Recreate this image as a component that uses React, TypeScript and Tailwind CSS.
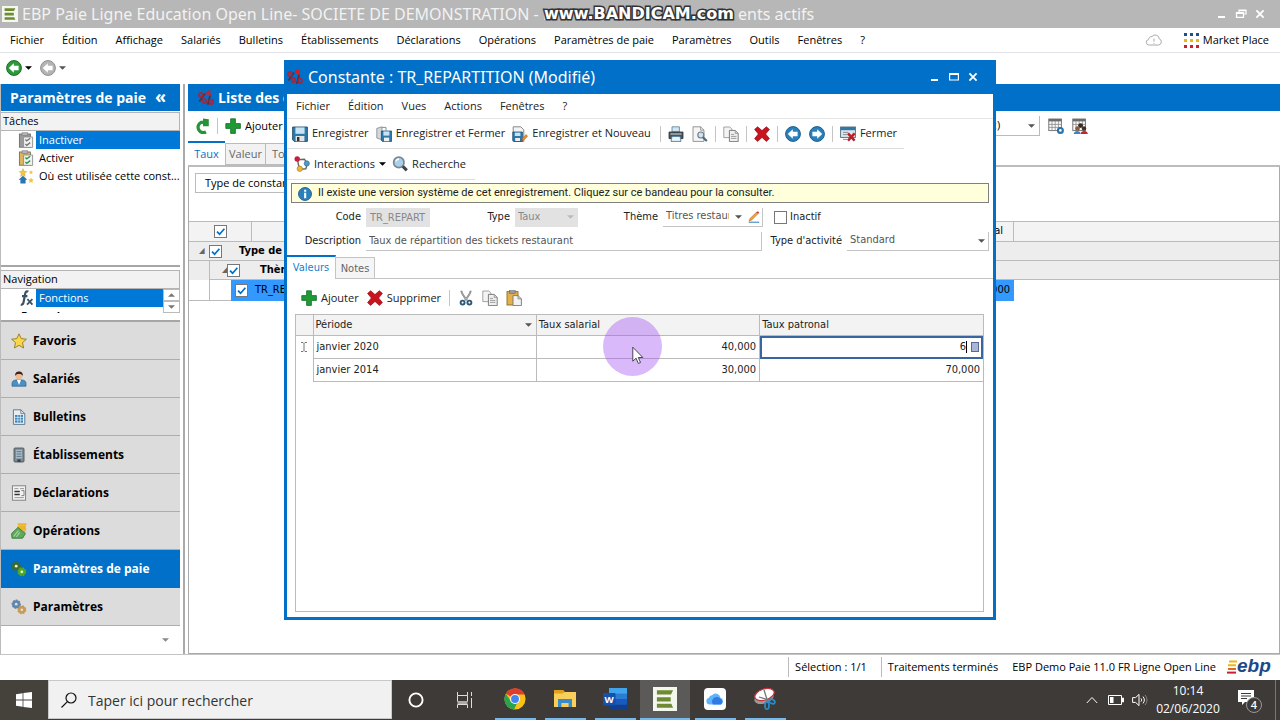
import React from "react";

type Kids = { children: React.ReactNode };

const Svg = ({ children, className = "size-4" }: Kids & { className?: string }) => (
  <svg viewBox="0 0 16 16" className={`${className} shrink-0`} aria-hidden="true">
    {children}
  </svg>
);

/* ---------- icons ---------- */

const EbpMark = ({ className = "size-4" }: { className?: string }) => (
  <Svg className={className}>
    <rect width="16" height="16" fill="#f4f7ee" />
    <path d="M2.6 2.2h10.8L12 5H2.6zM2.6 6.8h9.2v2.8H2.6zM2.6 11.2h9.6l1.2 2.6H2.6z" fill="#6f8a34" />
  </Svg>
);

const ArrowDisc = ({ color, dark, flip = false }: { color: string; dark: string; flip?: boolean }) => (
  <Svg>
    <circle cx="8" cy="8" r="7.4" fill={color} stroke={dark} strokeWidth="1" />
    <path
      d="M2.8 8l5-4.8v2.6h4.8v4.4H7.8v2.6z"
      fill="#fff"
      transform={flip ? "rotate(180 8 8)" : undefined}
    />
  </Svg>
);

const Percent = ({ className = "size-4" }: { className?: string }) => (
  <Svg className={className}>
    <path d="M7 3.4L1.4 11.4M12.2 5L9.8 14.8" stroke="#5c2a44" strokeWidth="1.8" />
    <g fill="none" stroke="#a3263a" strokeWidth="1.8">
      <ellipse cx="2.8" cy="5" rx="1.8" ry="2" />
      <ellipse cx="6.4" cy="11" rx="1.7" ry="2" />
      <ellipse cx="13.2" cy="11.8" rx="1.8" ry="2.2" />
    </g>
    <path d="M7.6 4.4L8.8 1l3.8-.8-.4 2.6 1 2.6-2.2.6-.8-1.8z" fill="#d01f26" />
  </Svg>
);

const Plus = () => (
  <Svg>
    <path d="M5.6 .8h4.8v4.8h5v4.8h-5v5H5.6v-5H.8V5.6h4.8z" fill="#1f9a35" stroke="#14702a" strokeWidth=".8" />
  </Svg>
);

const Cross = () => (
  <Svg>
    <path
      d="M3.6.8L8 4.6 12.4.8l3 2.6L11.6 8l3.8 4.6-3 2.8L8 11.4l-4.4 4-3-2.8L4.4 8 .6 3.4z"
      fill="#c8141e"
      stroke="#960b14"
      strokeWidth=".7"
    />
  </Svg>
);

const Refresh = () => (
  <Svg>
    <path d="M12 14A5.2 5.2 0 1 1 7 4.400h3" fill="none" stroke="#259437" strokeWidth="3.2" />
    <path d="M9 .6l5.800.600v7H9z" fill="#259437" />
  </Svg>
);

const Floppy = () => (
  <Svg>
    <path d="M.6 1h14.8v14.4H2.2L.6 13.8z" fill="#2f79a8" stroke="#1f4f70" strokeWidth=".9" />
    <rect x="3.4" y="1.4" width="9.2" height="6.4" fill="#c6e4f5" />
    <rect x="3.6" y="10" width="8.8" height="5.2" fill="#e4e4e4" />
    <rect x="5" y="11" width="2.4" height="4" fill="#333" />
  </Svg>
);

const FloppyDoor = () => (
  <Svg>
    <path d="M.8 2.4L6 .8v13L.8 12z" fill="#d5d8da" stroke="#7e868b" strokeWidth=".8" />
    <path d="M6 1.4h4v3.2" fill="none" stroke="#8a8f93" />
    <path d="M5.4 5h10.2v10.4H6.4l-1-1z" fill="#2f79a8" stroke="#1f4f70" strokeWidth=".8" />
    <rect x="7.4" y="5.4" width="6" height="4.2" fill="#c6e4f5" />
    <rect x="8" y="11.6" width="5.2" height="3.6" fill="#eee" />
  </Svg>
);

const FloppyNew = () => (
  <Svg>
    <path d="M1.2.8h7.6l3 3v11.6H1.2z" fill="#f3f3f3" stroke="#7c7c7c" strokeWidth=".9" />
    <path d="M.8 6h9.6v9.4H1.8l-1-1z" fill="#2f79a8" stroke="#1f4f70" strokeWidth=".8" />
    <rect x="2.8" y="6.6" width="5.6" height="3.4" fill="#c6e4f5" />
    <rect x="3.2" y="12" width="4.8" height="3" fill="#eee" />
    <path d="M9.8 14.6l1-2.8 3.4-3.2 1.4 1.6-3.2 3.4z" fill="#e8912d" stroke="#a8541a" strokeWidth=".5" />
  </Svg>
);

const Printer = () => (
  <Svg>
    <path d="M4 .8h7.4v5H4z" fill="#cfe6f5" stroke="#5a7a90" strokeWidth=".8" />
    <path d="M1 6h14v6.6H1z" fill="#4c5256" stroke="#2e3235" strokeWidth=".8" />
    <path d="M2.4 7.4h11.2v1.2H2.4z" fill="#bfc6ca" />
    <path d="M4 10.4h8l1 5H3z" fill="#eef5fa" stroke="#4a7fa6" strokeWidth=".9" />
  </Svg>
);

const Preview = () => (
  <Svg>
    <path d="M1 .8h7.6l3.4 3.4v11.2H1z" fill="#f5f5f5" stroke="#8c8c8c" strokeWidth=".9" />
    <path d="M8.6.8v3.4H12" fill="none" stroke="#8c8c8c" strokeWidth=".8" />
    <circle cx="8.8" cy="9" r="3" fill="#cfe3f2" stroke="#6d7b85" strokeWidth="1.1" />
    <path d="M11 11.4l3.8 3.6" stroke="#4b6b84" strokeWidth="2.2" />
  </Svg>
);

const Copy = () => (
  <Svg>
    <path d="M.8 1h6l2.2 2.2v8.4H.8z" fill="#f4f4f4" stroke="#9a9a9a" strokeWidth=".9" />
    <path d="M6.4 4.4h5.8l3 3v8.2H6.4z" fill="#f0f0f0" stroke="#707070" strokeWidth=".9" />
    <path d="M12.2 4.4v3h3M8 8.4h3M8 10.4h5.4M8 12.4h5.4" fill="none" stroke="#8a8a8a" strokeWidth=".8" />
  </Svg>
);

const Paste = () => (
  <Svg>
    <rect x="1" y="1.6" width="11" height="13.4" fill="#e2b04c" stroke="#8e6c26" strokeWidth=".9" />
    <rect x="3.6" y=".6" width="5.6" height="2.8" fill="#9c9c9c" stroke="#6a6a6a" strokeWidth=".6" />
    <path d="M7 5.6h5l3.4 3.2v6.8H7z" fill="#f2f2f2" stroke="#777" strokeWidth=".9" />
    <path d="M12 5.6v3.2h3.4" fill="none" stroke="#777" strokeWidth=".8" />
  </Svg>
);

const Scissors = () => (
  <Svg>
    <path d="M3.4.8c0 3 2.6 6 5.6 9.4M12.6.8c0 3-2.6 6-5.6 9.4" fill="none" stroke="#6e6e6e" strokeWidth="1.8" />
    <path d="M3.6 1.6c.4 2.6 2.6 5.4 5 8M12.4 1.6c-.4 2.6-2.6 5.4-5 8" fill="none" stroke="#eee" strokeWidth=".6" />
    <circle cx="4.6" cy="12.6" r="2" fill="none" stroke="#2c5878" strokeWidth="1.9" />
    <circle cx="11.4" cy="12.6" r="2" fill="none" stroke="#2c5878" strokeWidth="1.9" />
  </Svg>
);

const CloseForm = () => (
  <Svg>
    <rect x=".6" y="1" width="14.8" height="10.4" fill="#dfe3e6" stroke="#4c6a80" strokeWidth=".9" />
    <rect x=".6" y="1" width="14.8" height="3.2" fill="#2f79a8" />
    <path d="M3 6.4h5M3 8.6h4M3 13.4h4" stroke="#8a9299" />
    <path d="M8 7.4l6.6 7.2M14.6 7.4L8 14.6" stroke="#b5202b" strokeWidth="2.5" />
  </Svg>
);

const Interactions = () => (
  <Svg>
    <path d="M4 3.6l6.4-.4 3 4.4-1.6 5.2-6 .6M3.8 4.6l.6 4.2 1.4 3.2" fill="none" stroke="#666" strokeWidth="1.4" />
    <circle cx="3.2" cy="3" r="2.7" fill="#c81e3c" />
    <circle cx="12.8" cy="7.4" r="2.6" fill="#4b9cc4" stroke="#2c6c90" strokeWidth=".6" />
    <circle cx="5.8" cy="12.8" r="2.7" fill="#e9b83a" stroke="#a07a1c" strokeWidth=".6" />
  </Svg>
);

const Search = () => (
  <Svg>
    <circle cx="6.8" cy="6.4" r="5.2" fill="#a8d0ec" stroke="#7c858c" strokeWidth="1.7" />
    <path d="M4 5.4a3.2 3.2 0 0 1 3-2.4" stroke="#fff" strokeWidth="1.3" fill="none" />
    <path d="M10.8 10.4l4 4" stroke="#3e464c" strokeWidth="3" />
  </Svg>
);

const Info = () => (
  <Svg className="size-3.5">
    <circle cx="8" cy="8" r="7.4" fill="#2a80bb" stroke="#1d5c8a" />
    <path d="M7 6.6h2.4v6.2H7zM7 3h2.4v2.3H7z" fill="#fff" />
  </Svg>
);

const Clipboard = ({ color, check }: { color: string; check: string }) => (
  <Svg>
    <rect x="1.4" y="2" width="11" height="13.2" fill={color} stroke="#6e6e6e" strokeWidth=".9" />
    <rect x="4" y=".8" width="5.8" height="2.8" fill="#b5b5b5" stroke="#777" strokeWidth=".6" />
    <path d="M5.6 5h9v10.4h-9z" fill="#f1f3f3" stroke="#8a8f92" strokeWidth=".9" />
    <path d="M7.4 7.4l1.4 1.4 3.4-2.6M7.4 12l1.4 1.4 3.4-2.8" fill="none" stroke={check} strokeWidth="1.4" />
  </Svg>
);

const WhereUsed = () => (
  <Svg>
    <path d="M5 .6l1.2 2.6 2.6.4-2 2 .4 2.8L5 7 2.6 8.4l.6-2.8-2-2 2.6-.4z" fill="#f0c54c" stroke="#c39a2a" strokeWidth=".4" />
    <path d="M13 2l.7 1.4 1.5.2-1.1 1.1.3 1.6-1.4-.8-1.4.8.3-1.6-1.1-1.1 1.5-.2zM13 9.4l.9 1.8 1.9.3-1.4 1.4.4 2L13 14l-1.8.9.4-2-1.4-1.4 1.9-.3z" fill="#f0c54c" />
    <path d="M5 7.8l4.4 4H7.6v3.6H2.4v-3.6H.6z" fill="#2a74b0" />
  </Svg>
);

const Fx = () => (
  <Svg>
    <path d="M10.4 1.6C7.8.4 7.2 3 6.8 5.6L5.6 12c-.4 2-1.2 3-2.8 2.4M4 6.2h5.4" fill="none" stroke="#3d5164" strokeWidth="2.2" />
    <path d="M9.4 9.2l5 5.4M14.4 9.2l-5.4 5.4" stroke="#3d5164" strokeWidth="1.8" />
  </Svg>
);

const Star = () => (
  <Svg>
    <path d="M8 .8l2.2 4.8 5.2.6-3.9 3.5 1.1 5.3L8 12.3 3.4 15l1.1-5.3L.6 6.2l5.2-.6z" fill="#f8d748" stroke="#94781f" strokeWidth=".9" />
  </Svg>
);

const Person = () => (
  <Svg>
    <path d="M1 15.2v-2.8C1 10 3 9.2 5 9h6c2 .2 4 1 4 3.4v2.8z" fill="#4a90c4" stroke="#2a628e" strokeWidth=".7" />
    <path d="M6 9h4l-2 5z" fill="#fff" />
    <circle cx="8" cy="5" r="3.4" fill="#eebc92" />
    <path d="M4.2 5C3.6 1.6 6 .4 8 .4s4.4 1.2 3.8 4.6C11 3.4 10 3 8 3s-3 .4-3.8 2z" fill="#3a241b" />
  </Svg>
);

const PaySheet = () => (
  <Svg>
    <path d="M2.4.8h7.4l4 3.8v10.8H2.4z" fill="#e8edf1" stroke="#54728a" strokeWidth=".9" />
    <path d="M9.8.8v3.8h4" fill="none" stroke="#54728a" strokeWidth=".8" />
    <rect x="4" y="6" width="8" height="7.6" fill="#3a84ba" />
    <path d="M4 8.4h8M4 11h8M6.8 6v7.6M9.4 6v7.6" stroke="#d4e6f2" strokeWidth=".8" />
  </Svg>
);

const Building = () => (
  <Svg>
    <rect x="3" y="1" width="10" height="14" rx="1" fill="#7d8a93" stroke="#4c555c" strokeWidth=".9" />
    <rect x="5" y="2.8" width="6" height="8.6" fill="#a9bbc8" />
    <path d="M5.6 4.6h4.8M5.6 7h4.8M5.6 9.4h4.8" stroke="#5f7a8e" />
    <rect x="6.4" y="12.4" width="3.2" height="2.6" fill="#3b4248" />
  </Svg>
);

const Form = () => (
  <Svg>
    <rect x="1.4" y=".8" width="13.2" height="14.4" fill="#f2f2f2" stroke="#7a7a7a" strokeWidth=".9" />
    <path d="M3.4 3.6h4M9 3.6h4M3.4 12.6h9.4" stroke="#8e8e8e" strokeWidth=".9" />
    <path d="M3.4 6.4h5.4M3.4 9.6h5.4" stroke="#333" strokeWidth="1.5" />
    <path d="M10.4 5.6H13v5h-2.6" fill="none" stroke="#777" strokeWidth=".9" />
  </Svg>
);

const Money = () => (
  <Svg>
    <path d="M6.8 1.4h8.6M6.6 3.8h8.2M7.4 6.2h7.8M8.4 8.6h6.2" stroke="#e9b52e" strokeWidth="2.2" />
    <path d="M.6 10.6L7 4.4l7.4 6.2-2.8 4.6H1z" fill="#5ea85c" stroke="#3a7a3c" strokeWidth=".9" />
    <path d="M2.6 13.6l4.8-6M5.4 14l3.4-4.6" stroke="#a5d59e" strokeWidth="1.1" />
  </Svg>
);

const TwoGears = ({ a, b, c }: { a: string; b: string; c: string }) => (
  <Svg>
    <circle cx="5.2" cy="5.2" r="3.9" fill={a} stroke={a} strokeWidth="1.6" strokeDasharray="1.8 1.1" />
    <circle cx="5.2" cy="5.2" r="1.4" fill={c} />
    <circle cx="10.8" cy="10.8" r="3.7" fill={b} stroke={b} strokeWidth="1.6" strokeDasharray="1.8 1.1" />
    <circle cx="10.8" cy="10.8" r="1.4" fill={c} />
  </Svg>
);

const GridGear = () => (
  <Svg>
    <rect x=".8" y="1" width="12.6" height="11.6" fill="#fafafa" stroke="#6c6c6c" strokeWidth=".9" />
    <path d="M.8 2.2h12.6" stroke="#6c6c6c" strokeWidth="2.4" />
    <path d="M.8 6.4h12.6M.8 9.4h12.6M4 3v9.6M7.2 3v9.6M10.4 3v9.6" stroke="#8a8a8a" strokeWidth=".8" />
    <circle cx="12.4" cy="12.4" r="2.4" fill="#fff" stroke="#2a72aa" strokeWidth="2.2" />
  </Svg>
);

const GridUsers = () => (
  <Svg>
    <rect x=".8" y="1" width="12.6" height="11.6" fill="#fafafa" stroke="#6c6c6c" strokeWidth=".9" />
    <path d="M.8 2.2h12.6" stroke="#6c6c6c" strokeWidth="2.4" />
    <path d="M.8 6.4h12.6M4 3v9.6M7.2 3v9.6M10.4 3v9.6" stroke="#8a8a8a" strokeWidth=".8" />
    <circle cx="8.6" cy="7.6" r="2.4" fill="#3a2a22" />
    <circle cx="5.4" cy="10.4" r="2.2" fill="#8a5a3a" />
    <circle cx="12" cy="10.4" r="2.2" fill="#4a2c20" />
    <path d="M1.8 16c0-4 6.8-4 6.8 0z" fill="#3b86bc" />
    <path d="M8.6 16c0-4 7.200-4 7.200 0z" fill="#c42430" />
  </Svg>
);

const Pencil = () => (
  <Svg className="size-3">
    <path d="M1 15h14" stroke="#4b93c4" strokeWidth="1.6" />
    <path d="M1.4 13.6l1.2-3.6 9-8.6 2 2-8.800 8.800z" fill="#f0a040" stroke="#b06a24" strokeWidth=".7" />
    <path d="M11.2 1.8l2-1.4 1.6 1.6-1.4 1.800z" fill="#d2373c" />
  </Svg>
);

const Caret = ({ className = "text-[#555]" }: { className?: string }) => (
  <svg viewBox="0 0 8 4" className={`w-[7px] h-1 shrink-0 ${className}`} aria-hidden="true">
    <path d="M0 0h8L4 4z" fill="currentColor" />
  </svg>
);

/* ---------- small pieces ---------- */

const uiFont = "[font-family:'Open_Sans','Noto_Sans',sans-serif]";
const formFont = "[font-family:'DejaVu_Sans_Condensed','DejaVu_Sans',sans-serif]";
const titleFont = "[font-family:'Noto_Sans','Open_Sans',sans-serif]";

const Sep = () => <span className="mx-[7px] h-4 w-px shrink-0 bg-[#c4c4c4]" />;

const Tool = ({ icon, children, label }: { icon: React.ReactNode; children?: React.ReactNode; label?: string }) => (
  <button type="button" aria-label={label} className="flex shrink-0 items-center gap-1 whitespace-nowrap">
    {icon}
    {children}
  </button>
);

const WindowButtons = ({ restore }: { restore: boolean }) => (
  <div className="flex items-center gap-[7px]">
    <button type="button" aria-label="Réduire" className="size-3">
      <svg viewBox="0 0 12 12"><path d="M2 9h7" stroke="#fff" strokeWidth="2" /></svg>
    </button>
    <button type="button" aria-label="Agrandir" className="size-3">
      <svg viewBox="0 0 12 12" fill="none" stroke="#fff" strokeWidth="1.2">
        {restore ? (
          <path d="M4 4V2h7v4H9M1.5 4.6h7v4.8h-7zM4 2.6h7M1.5 5.4h7" />
        ) : (
          <path d="M1.6 2.6h8.8v6.4H1.6zM1.6 3.4h8.8" />
        )}
      </svg>
    </button>
    <button type="button" aria-label="Fermer la fenêtre" className="size-3">
      <svg viewBox="0 0 12 12"><path d="M2.4 2.4l7.2 7.2M9.6 2.4L2.4 9.6" stroke="#fff" strokeWidth="1.8" /></svg>
    </button>
  </div>
);

const Check = ({ label, checked = false, tick = true }: { label: string; checked?: boolean; tick?: boolean }) => (
  <span className="grid shrink-0">
    <input
      type="checkbox"
      aria-label={label}
      defaultChecked={checked}
      className="col-start-1 row-start-1 size-[13px] appearance-none border border-[#777] bg-white"
    />
    {tick && (
      <svg viewBox="0 0 13 13" className="pointer-events-none col-start-1 row-start-1 size-[13px]" aria-hidden="true">
        <path d="M3 6.6l2.6 2.6L10.4 3.8" fill="none" stroke="#0070c8" strokeWidth="1.7" />
      </svg>
    )}
  </span>
);

/* ---------- main window ---------- */

const mainMenu = [
  "Fichier", "Édition", "Affichage", "Salariés", "Bulletins", "Établissements", "Déclarations",
  "Opérations", "Paramètres de paie", "Paramètres", "Outils", "Fenêtres", "?",
];

const navSections = [
  { label: "Favoris", icon: <Star /> },
  { label: "Salariés", icon: <Person /> },
  { label: "Bulletins", icon: <PaySheet /> },
  { label: "Établissements", icon: <Building /> },
  { label: "Déclarations", icon: <Form /> },
  { label: "Opérations", icon: <Money /> },
  { label: "Paramètres de paie", icon: <TwoGears a="#3f6b2c" b="#4fa81e" c="#e8f4dc" />, active: true },
  { label: "Paramètres", icon: <TwoGears a="#5f86ab" b="#c89a55" c="#dcdcdc" /> },
];

const tasks = [
  { label: "Inactiver", icon: <Clipboard color="#9a9a9a" check="#777" />, active: true },
  { label: "Activer", icon: <Clipboard color="#dcb65c" check="#2b9a44" /> },
  { label: "Où est utilisée cette const...", icon: <WhereUsed /> },
];

function TitleBar() {
  return (
    <header className={`flex h-7 shrink-0 items-center bg-[#b7b7b7] pl-0.5 pr-3.5 ${titleFont}`}>
      <EbpMark />
      <div className="ml-1 flex flex-1 items-center whitespace-nowrap text-base text-[#f2f2f2]">
        <span className="w-[516px]">EBP Paie Ligne Education Open Line- SOCIETE DE DEMONSTRATION - E</span>
        <svg viewBox="0 0 200 20" className="relative h-5 w-[200px] shrink-0" aria-hidden="true">
          <text
            x="101" y="15" textAnchor="middle" fontSize="16" fontWeight="700"
            fontFamily="'DejaVu Sans',sans-serif" fill="#fff" stroke="#333" strokeWidth="3" paintOrder="stroke"
          >
            www.BANDICAM.com
          </text>
        </svg>
        <span>ents actifs</span>
      </div>
      <WindowButtons restore />
    </header>
  );
}

function MenuBar() {
  const rows = ["#1e4e8c", "#e8b420", "#c8202c"];
  return (
    <nav className="flex h-[25px] shrink-0 items-center border-b border-[#e2e2ea] pl-2.5 pr-[11px] text-[11px]">
      <div className="flex flex-1 items-center gap-[18px]">
        {mainMenu.map((m) => (
          <button key={m} type="button" className="whitespace-nowrap">{m}</button>
        ))}
      </div>
      <svg viewBox="0 0 18 14" className="mr-5 h-3.5 w-[18px]" fill="none" stroke="#aaa" aria-hidden="true">
        <path d="M4.4 12h9.2a3.2 3.2 0 0 0 .6-6.2A4 4 0 0 0 7 3.6a3 3 0 0 0-3.4 3A2.7 2.7 0 0 0 4.4 12zM9 5.6v3M9 9.8v1" />
      </svg>
      <button type="button" className="flex items-center gap-1">
        <svg viewBox="0 0 16 16" className="size-4" aria-hidden="true">
          {rows.map((c, r) =>
            [0, 1, 2].map((k) => <rect key={`${c}${k}`} x={1 + k * 6} y={1 + r * 6} width="3" height="3" fill={c} />)
          )}
        </svg>
        <span className="whitespace-nowrap">Market Place</span>
      </button>
    </nav>
  );
}

function Sidebar() {
  return (
    <aside className="flex w-[180px] shrink-0 flex-col border-l border-[#bbb]">
      <h1 className="flex h-[27px] shrink-0 items-center justify-between bg-[#0070c8] pl-[9px] pr-3.5 text-sm font-bold text-white">
        Paramètres de paie
        <span className="pb-1 text-lg leading-5">«</span>
      </h1>
      <div className="flex min-h-0 flex-1 flex-col">
        <h2 className="mt-px flex h-[19px] shrink-0 items-center border border-l-0 border-[#b4b4b4] bg-[#f2f2f2] pl-0.5 text-[11px]">
          Tâches
        </h2>
        <ul className="flex-1 text-[11px]">
          {tasks.map((t) => (
            <li key={t.label} className="flex h-[18px] items-center gap-[1px] pl-[17px]">
              {t.icon}
              <button
                type="button"
                className={`ml-px h-[18px] flex-1 whitespace-nowrap pl-[3px] text-left ${t.active ? "bg-[#0078d7] text-white" : ""}`}
              >
                {t.label}
              </button>
            </li>
          ))}
        </ul>
      </div>
      <div className="flex h-[55px] shrink-0 flex-col border-t-2 border-[#a6a6a6]">
        <h2 className="mt-[3px] flex h-[19px] shrink-0 items-center border border-l-0 border-[#b4b4b4] bg-[#f2f2f2] pl-0.5 text-[11px]">
          Navigation
        </h2>
        <div className="flex text-[11px]">
          <div className="flex h-6 flex-1 flex-col overflow-hidden">
            <div className="flex h-[18px] shrink-0 items-center pl-[17px]">
              <Fx />
              <a href="#fonctions" className="ml-0.5 flex-1 bg-[#0078d7] pl-[3px] leading-[18px] text-white">Fonctions</a>
            </div>
            <b className="pl-5 leading-[18px]">Formules</b>
          </div>
          <div className="flex w-[17px] flex-col">
            <button type="button" aria-label="Monter" className="flex h-3 items-center justify-center border border-[#bbb]">
              <Caret className="rotate-180 text-[#777]" />
            </button>
            <button type="button" aria-label="Descendre" className="flex h-3 items-center justify-center border border-[#bbb]">
              <Caret className="text-[#777]" />
            </button>
          </div>
        </div>
      </div>
      <nav className="shrink-0 border-t-2 border-[#a6a6a6]">
        {navSections.map((s) => (
          <button
            key={s.label}
            type="button"
            className={`flex h-[38px] w-full items-center gap-1.5 border-b pl-2.5 text-xs font-bold ${
              s.active ? "border-[#0070c8] bg-[#0070c8] text-white" : "border-[#adadad] bg-[#dcdcdc]"
            }`}
          >
            {s.icon}
            {s.label}
          </button>
        ))}
      </nav>
      <div className="flex h-[28px] shrink-0 items-center justify-end pr-[11px]">
        <Caret className="text-[#888]" />
      </div>
    </aside>
  );
}

function ListPanel() {
  return (
    <main className="flex min-w-0 flex-1 flex-col">
      <h2 className="flex h-[27px] shrink-0 items-center gap-1 bg-[#0070c8] pl-2.5 text-sm font-bold text-white">
        <Percent />
        Liste des constantes
      </h2>
      <div className="flex h-[30px] shrink-0 items-center justify-between pl-1.5 text-[11px]">
        <div className="flex items-center">
          <Tool icon={<Refresh />} label="Actualiser" />
          <Sep />
          <Tool icon={<Plus />}>Ajouter</Tool>
        </div>
        <div className="mr-[192px] flex h-full items-center gap-2">
          <div className="flex h-5 w-16 items-center justify-between border-r border-b border-[#bbb] pr-1">
            <span className="pl-[18px]">:)</span>
            <Caret />
          </div>
          <Tool icon={<GridGear />} label="Colonnes" />
          <Tool icon={<GridUsers />} label="Utilisateurs" />
        </div>
      </div>
      <div className="flex h-[26px] shrink-0 items-end border-b-2 border-[#bcbcbc] text-[11px]">
        <button type="button" className="h-6 w-[37px] border-t-2 border-t-[#0070c8] text-[#0a72c4]">Taux</button>
        <button type="button" className="h-[22px] w-[41px] border border-[#bbb] bg-[#f2f2f2] text-[#666]">Valeur</button>
        <button type="button" className="h-[22px] w-10 border border-l-0 border-[#bbb] bg-[#f2f2f2] pl-1.5 text-left text-[#666]">Total</button>
      </div>
      <div className="flex min-h-0 flex-1 flex-col border border-t-0 border-[#aaa]">
        <div className="h-[54px] shrink-0 pl-1.5 pt-2.5">
          <button type="button" className="-mt-1 block h-5 w-32 overflow-hidden whitespace-nowrap border border-[#bbb] pl-[9px] text-left text-[11px]">
            Type de constante
          </button>
        </div>
        <div className={`flex flex-col text-[11px] ${formFont}`}>
          <div className="flex h-[21px] border-y border-[#bbb] bg-[#f3f3f3]">
            <div className="flex w-[63px] items-center justify-center border-r border-[#bbb]">
              <Check label="Tout sélectionner" checked />
            </div>
            <div className="flex w-[762px] items-center justify-end border-r border-[#bbb] pr-2.5">Taux salarial</div>
          </div>
          <div className="flex h-[19px] items-center border-b border-[#bbb] bg-[#ededed] pl-2.5 font-bold">
            <span className="w-2.5 text-[8px] text-[#666]">◢</span>
            <Check label="Type" checked />
            <span className="ml-[17px]">Type de constante : Taux</span>
          </div>
          <div className="flex h-[19px] bg-[#ededed] pl-5">
            <div className="flex flex-1 items-center border-l border-b border-[#bbb] pl-3 font-bold">
              <span className="w-[5px] text-[8px] text-[#666]">◢</span>
              <Check label="Thème" checked />
              <span className="ml-5">Thème : Titres restaurant</span>
            </div>
          </div>
          <div className="flex h-[21px]">
            <div className="w-5 border-b border-[#bbb]" />
            <div className="w-[22px] border-b border-l border-[#bbb]" />
            <div className="flex w-[783px] items-center bg-[#3399ff] pl-1">
              <Check label="TR_REPARTITION" checked />
              <span className="ml-[7px] flex-1">TR_REPARTITION</span>
              <span className="pr-1">70,000</span>
            </div>
          </div>
        </div>
      </div>
    </main>
  );
}

function StatusBar() {
  return (
    <footer className="flex h-[26px] shrink-0 items-center justify-end border-t border-[#c4c4c4] bg-white pr-1 pb-px text-[11px]">
      <span className="border-l border-[#bbb] px-1.5 leading-5">Sélection : 1/1</span>
      <span className="ml-2 border-l border-[#bbb] pl-1.5 leading-5">Traitements terminés</span>
      <span className="ml-3.5 leading-5">EBP Demo Paie 11.0 FR Ligne Open Line</span>
      <svg viewBox="0 0 50 24" className="ml-2.5 h-6 w-[50px]" aria-label="ebp">
        <path d="M3 6.5h8M2 10.3h8" stroke="#f0b51c" strokeWidth="2" />
        <path d="M2 14h8" stroke="#e06a1c" strokeWidth="2" />
        <path d="M1 17.6h9" stroke="#c8202c" strokeWidth="2" />
        <text x="11" y="17" fontFamily="'Liberation Sans',sans-serif" fontWeight="700" fontStyle="italic" fontSize="19" fill="#1a4a8a">
          ebp
        </text>
      </svg>
    </footer>
  );
}

/* ---------- dialog ---------- */

const labelCls = "shrink-0 whitespace-nowrap text-right";

function Dialog() {
  return (
    <section
      role="dialog"
      aria-label="Constante : TR_REPARTITION"
      className="absolute left-[284px] top-[60px] flex h-[560px] w-[712px] flex-col border-[3px] border-t-0 border-[#0070c8] bg-white text-[#222]"
    >
      <div className={`flex h-[34px] shrink-0 items-center gap-[5px] bg-[#0070c8] pr-3.5 text-white ${titleFont}`}>
        <Percent />
        <h2 className="flex-1 text-base">Constante : TR_REPARTITION (Modifié)</h2>
        <WindowButtons restore={false} />
      </div>
      <nav className="flex h-[25px] shrink-0 items-center gap-[18px] border-b border-[#e6e6e6] pl-[9px] text-[11px]">
        {["Fichier", "Édition", "Vues", "Actions", "Fenêtres", "?"].map((m) => (
          <button key={m} type="button">{m}</button>
        ))}
      </nav>
      <div className="flex h-[30px] w-[617px] shrink-0 items-center border-b border-[#dcdcdc] pl-[5px] text-[11px]">
        <div className="flex items-center gap-[7px] pr-0.5">
          <Tool icon={<Floppy />}>Enregistrer</Tool>
          <Tool icon={<FloppyDoor />}>Enregistrer et Fermer</Tool>
          <Tool icon={<FloppyNew />}>Enregistrer et Nouveau</Tool>
        </div>
        <Sep />
        <div className="flex gap-2">
          <Tool icon={<Printer />} label="Imprimer" />
          <Tool icon={<Preview />} label="Aperçu" />
        </div>
        <Sep />
        <Tool icon={<Copy />} label="Dupliquer" />
        <Sep />
        <Tool icon={<Cross />} label="Supprimer l'enregistrement" />
        <Sep />
        <div className="flex gap-2">
          <Tool icon={<ArrowDisc color="#2a80bb" dark="#1d5c8a" />} label="Précédent" />
          <Tool icon={<ArrowDisc color="#2a80bb" dark="#1d5c8a" flip />} label="Suivant" />
        </div>
        <Sep />
        <Tool icon={<CloseForm />}>Fermer</Tool>
      </div>
      <div className="flex h-[31px] w-[188px] shrink-0 items-center gap-1.5 border-b border-[#dcdcdc] pl-[7px] text-[11px]">
        <Tool icon={<Interactions />}>
          Interactions
          <Caret className="text-black" />
        </Tool>
        <Tool icon={<Search />}>Recherche</Tool>
      </div>
      <button
        type="button"
        className="mx-1 mt-[3px] flex h-5 shrink-0 items-center gap-1.5 border border-[#808080] bg-[#ffffdc] pl-1.5 pt-px [font-family:Roboto,'Liberation_Sans',sans-serif] text-[11px]"
      >
        <Info />
        Il existe une version système de cet enregistrement. Cliquez sur ce bandeau pour la consulter.
      </button>

      <div className={`mt-1 flex shrink-0 flex-col gap-1 pr-1 text-[11px] ${formFont}`}>
        <div className="flex h-5 items-center">
          <label htmlFor="code" className={`${labelCls} w-[74px]`}>Code</label>
          <input id="code" defaultValue="TR_REPART" disabled className="ml-[5px] h-[19px] w-16 bg-[#e2e2e2] px-1 text-[#888]" />
          <label htmlFor="type" className={`${labelCls} w-[80px]`}>Type</label>
          <div className="ml-[5px] flex h-[19px] w-[63px] items-center bg-[#e2e2e2] pr-1">
            <select id="type" disabled className="min-w-0 flex-1 appearance-none pl-[3px] text-[#888] opacity-100">
              <option>Taux</option>
            </select>
            <Caret className="text-[#bbb]" />
          </div>
          <label htmlFor="theme" className={`${labelCls} w-[80px]`}>Thème</label>
          <div className="ml-[5px] flex h-[19px] w-[100px] items-center gap-1.5 border-b border-r border-[#c4c4c4] pr-0.5">
            <select id="theme" className="w-[68px] min-w-0 flex-1 appearance-none overflow-hidden pl-[3px] text-[#555]">
              <option>Titres restaurant</option>
            </select>
            <Caret />
            <Pencil />
          </div>
          <label className="ml-[11px] flex items-center gap-[3px]">
            <Check label="Inactif" tick={false} />
            Inactif
          </label>
        </div>
        <div className="flex h-5 items-center">
          <label htmlFor="desc" className={`${labelCls} w-[74px]`}>Description</label>
          <input
            id="desc"
            defaultValue="Taux de répartition des tickets restaurant"
            className="ml-[5px] h-[19px] w-[396px] border-b border-r border-[#c4c4c4] px-[3px] text-[#555]"
          />
          <label htmlFor="activite" className={`${labelCls} w-20`}>Type d'activité</label>
          <div className="ml-[5px] flex h-[19px] flex-1 items-center border-b border-r border-[#c4c4c4] pr-[3px]">
            <select id="activite" className="flex-1 appearance-none pl-[3px] text-[#555]">
              <option>Standard</option>
            </select>
            <Caret />
          </div>
        </div>
      </div>

      <div className={`mt-1 flex h-6 shrink-0 items-end border-b border-[#c4c4c4] text-[11px] ${formFont}`}>
        <button type="button" className="-mb-px h-6 w-[49px] border-r border-t-2 border-r-[#c4c4c4] border-t-[#0070c8] bg-white text-[#1a80cc]">
          Valeurs
        </button>
        <button type="button" className="h-[21px] w-[39px] border border-b-0 border-l-0 border-[#c4c4c4] bg-[#f5f5f5] pt-0.5 text-[#666]">
          Notes
        </button>
      </div>

      <div className="flex min-h-0 flex-1 flex-col pl-2 pr-[9px] pb-[5px] pt-[7px]">
        <div className="flex h-7 w-[238px] shrink-0 items-center gap-2 pb-1 pl-1.5 text-[11px]">
          <Tool icon={<Plus />}>Ajouter</Tool>
          <Tool icon={<Cross />}>Supprimer</Tool>
          <span className="h-4 w-px shrink-0 bg-[#c4c4c4]" />
          <Tool icon={<Scissors />} label="Couper" />
          <Tool icon={<Copy />} label="Copier" />
          <Tool icon={<Paste />} label="Coller" />
        </div>
        <div className={`flex-1 border border-[#bbb] text-[11px] ${formFont}`}>
          <table className="w-full table-fixed border-collapse">
            <colgroup>
              <col className="w-[17px]" />
              <col />
              <col />
              <col />
            </colgroup>
            <thead>
              <tr className="h-5 border-b border-[#bbb] bg-[#f3f3f3] text-left">
                <th className="border-r border-[#bbb]" />
                <th className="border-r border-[#bbb] pl-0.5 font-normal">
                  <span className="flex items-center justify-between pr-1">
                    Période
                    <Caret />
                  </span>
                </th>
                <th className="border-r border-[#bbb] pl-0.5 font-normal">Taux salarial</th>
                <th className="pl-0.5 font-normal">Taux patronal</th>
              </tr>
            </thead>
            <tbody>
              <tr className="h-[23px]">
                <td className="border-r border-[#bbb]">
                  <svg viewBox="0 0 8 10" className="mx-auto h-2.5 w-2" fill="none" stroke="#777" aria-hidden="true">
                    <path d="M1 .5h2l1 1 1-1h2M1 9.5h2l1-1 1 1h2M4 1.5v7" />
                  </svg>
                </td>
                <td className="border-b border-r border-[#bbb] pl-[3px]">janvier 2020</td>
                <td className="border-b border-r border-[#bbb] pr-[3px] text-right">40,000</td>
                <td className="p-0">
                  <div className="flex h-[23px] items-center border-2 border-[#3a66a0] bg-white pr-0.5">
                    <input aria-label="Taux patronal" defaultValue="6" className="min-w-0 flex-1 text-right outline-none" />
                    <span className="h-3 w-px bg-black" />
                    <button type="button" aria-label="Calculatrice" className="ml-1 h-2.5 w-2 border border-[#5a6a94] bg-[#aab6d6]" />
                  </div>
                </td>
              </tr>
              <tr className="h-[23px]">
                <td className="border-r border-[#bbb]" />
                <td className="border-b border-r border-[#bbb] pl-[3px]">janvier 2014</td>
                <td className="border-b border-r border-[#bbb] pr-[3px] text-right">30,000</td>
                <td className="border-b border-[#bbb] pr-[3px] text-right">70,000</td>
              </tr>
            </tbody>
          </table>
        </div>
      </div>

      <div className="pointer-events-none absolute left-[316px] top-[257px] size-[59px] rounded-full bg-[#a050f0]/40">
        <svg viewBox="0 0 12 19" className="ml-[29px] mt-[29px] h-[19px] w-3" aria-hidden="true">
          <path d="M.8 1.2v14l3.3-3 2.2 5.2 2.2-.9-2.2-5h4.5z" fill="#fff" stroke="#222" strokeWidth=".8" />
        </svg>
      </div>
    </section>
  );
}

/* ---------- taskbar ---------- */

const ChromeIcon = () => (
  <svg viewBox="0 0 24 24" className="size-[22px]" aria-hidden="true">
    <circle cx="12" cy="12" r="11.5" fill="#fbc116" />
    <path d="M12 12L2 6.2A11.5 11.5 0 0 1 22 6.2L22.4 7H12z" fill="#e33b2e" />
    <path d="M2 6.2L7.6 14.6 14.4 16 11 23.5A11.5 11.5 0 0 1 2 6.2z" fill="#2ba24c" />
    <circle cx="12" cy="12" r="5.4" fill="#fff" />
    <circle cx="12" cy="12" r="4.3" fill="#4285f4" />
  </svg>
);

const FolderIcon = () => (
  <svg viewBox="0 0 22 20" className="h-5 w-[22px]" aria-hidden="true">
    <path d="M0 1h9l1.6 2H22v15H0z" fill="#f8cf5a" />
    <path d="M0 1h9l1.6 2L9 4.6H0z" fill="#e0a21a" />
    <path d="M4 10h14v8h-3.4v-4H7.4v4H4z" fill="#3a8cc8" />
  </svg>
);

const WordIcon = () => (
  <svg viewBox="0 0 24 22" className="h-[22px] w-6" aria-hidden="true">
    <rect x="6" width="18" height="22" rx="1.5" fill="#2b7cd3" />
    <rect x="6" width="18" height="5.6" fill="#41a5ee" />
    <rect x="6" y="11" width="18" height="5.5" fill="#185abd" />
    <rect x="6" y="16.5" width="18" height="5.5" fill="#103f91" />
    <rect y="5" width="12.5" height="12.5" rx="1" fill="#1650ad" />
    <text x="6.2" y="14.8" textAnchor="middle" fontFamily="'Open Sans',sans-serif" fontSize="9.5" fontWeight="700" fill="#fff">W</text>
  </svg>
);

const CloudIcon = () => (
  <svg viewBox="0 0 22 22" className="size-[22px]" aria-hidden="true">
    <rect width="22" height="22" rx="4" fill="#fff" />
    <path d="M5.6 16.5a3.4 3.4 0 0 1-.6-6.7 3 3 0 0 1 3-2.6 4.8 4.8 0 0 1 8.4 2.6 3.6 3.6 0 0 1 .6 6.7z" fill="#5db4f8" />
    <path d="M9 16.5a4.6 4.6 0 0 1 7.4-5.8 3.4 3.4 0 0 1 .6 5.8z" fill="#2f7ae5" />
  </svg>
);

const SnipIcon = () => (
  <svg viewBox="0 0 24 24" className="size-6" aria-hidden="true">
    <ellipse cx="11" cy="11" rx="10" ry="5.5" transform="rotate(-18 11 11)" fill="#9a9a9a" />
    <ellipse cx="11.5" cy="7.5" rx="10" ry="5.5" transform="rotate(-18 11.5 7.5)" fill="#fff" stroke="#c8323c" strokeWidth="1.2" />
    <path d="M11 3l3.5 11M6 10l10 3" stroke="#777" strokeWidth="1.3" />
    <g fill="none" stroke="#2a8ccc" strokeWidth="1.7">
      <ellipse cx="14" cy="18.5" rx="2" ry="3.6" />
      <ellipse cx="19" cy="14.5" rx="3" ry="2" transform="rotate(25 19 14.5)" />
    </g>
  </svg>
);

const apps = [
  { name: "Google Chrome", icon: <ChromeIcon /> },
  { name: "Explorateur de fichiers", icon: <FolderIcon /> },
  { name: "Word", icon: <WordIcon /> },
  { name: "EBP Paie", icon: <EbpMark className="size-6" />, active: true },
  { name: "iCloud", icon: <CloudIcon /> },
  { name: "Outil Capture", icon: <SnipIcon /> },
];

function Taskbar() {
  return (
    <footer className="flex h-10 shrink-0 bg-[#3d3a38] text-white">
      <button type="button" aria-label="Démarrer" className="flex w-12 items-center justify-center bg-[#45423c]">
        <svg viewBox="0 0 16 16" className="size-4" fill="#fff" aria-hidden="true">
          <path d="M0 2.2L6.6 1.2v6.4H0zM7.4 1.1L16 0v7.6H7.4zM0 8.4h6.6v6.4L0 13.8zM7.4 8.4H16V16l-8.6-1.1z" />
        </svg>
      </button>
      <label className="mb-px flex w-[344px] items-center gap-[11px] border border-[#c8c8c8] bg-[#f1f1f1] pl-3 text-[#333]">
        <svg viewBox="0 0 16 16" className="size-4" fill="none" stroke="#111" strokeWidth="1.2" aria-hidden="true">
          <circle cx="10" cy="6" r="5" />
          <path d="M6.4 9.6L0.5 15.5" />
        </svg>
        <input
          aria-label="Rechercher"
          placeholder="Taper ici pour rechercher"
          className="min-w-0 flex-1 pt-0.5 text-sm placeholder-[#333] outline-none"
        />
      </label>
      <button type="button" aria-label="Cortana" className="flex w-12 items-center justify-center">
        <svg viewBox="0 0 16 16" className="size-4" aria-hidden="true">
          <circle cx="8" cy="8" r="6.6" fill="none" stroke="#fff" strokeWidth="1.9" />
        </svg>
      </button>
      <button type="button" aria-label="Affichage des tâches" className="flex w-[50px] items-center justify-center">
        <svg viewBox="0 0 16 16" className="size-4" fill="none" stroke="#ddd" aria-hidden="true">
          <path d="M.5 0v3.500h10V0M.5 16v-3.500h10V16M.5 3.500v6h10v-6M14.500 0v4M14.500 6v10" />
          <path d="M.5 10.500h10" stroke="#aaa" strokeWidth="3" />
        </svg>
      </button>
      {apps.map((a) => (
        <button
          key={a.name}
          type="button"
          aria-label={a.name}
          className={`flex w-[50px] flex-col items-center ${a.active ? "bg-[#5c5a58]" : ""}`}
        >
          <span className="flex flex-1 items-center justify-center">{a.icon}</span>
          <span className={`h-0.5 bg-[#76b9ed] ${a.active ? "w-full" : "w-[41px]"}`} />
        </button>
      ))}
      <div className="flex flex-1 items-center justify-end pr-1">
        <svg viewBox="0 0 12 8" className="h-2 w-3" fill="none" stroke="#fff" aria-hidden="true">
          <path d="M.8 7L6 1.5 11.2 7" />
        </svg>
        <svg viewBox="0 0 16 10" className="ml-2.5 h-2.5 w-4" aria-hidden="true">
          <path d="M.5.5h13v9H.5zM14.5 3h1v4h-1z" fill="none" stroke="#fff" />
          <rect x="2" y="2" width="3.5" height="6" fill="#fff" />
        </svg>
        <svg viewBox="0 0 16 14" className="ml-2 h-3.5 w-4" fill="none" stroke="#fff" aria-hidden="true">
          <path d="M.6 4.6h3L7 1.4v11.2L3.6 9.4h-3z" />
          <path d="M9 5.4c.8 1 .8 2.2 0 3.2M11 3.6c1.800 2 1.800 4.800 0 6.800" />
          <path d="M13 2c2.600 3 2.600 7 0 10" stroke="#888" />
        </svg>
        <div className="ml-2 w-16 text-center text-xs leading-[18px]">
          <div>10:14</div>
          <div>02/06/2020</div>
        </div>
        <button type="button" aria-label="Notifications" className="ml-[17px] mr-3 size-[26px]">
          <svg viewBox="0 0 26 26" aria-hidden="true">
            <path d="M1 3h16v12H8l-3 3v-3H1z" fill="#fff" />
            <path d="M4 6.5h10M4 9h10M4 11.5h6" stroke="#3d3a38" />
            <circle cx="17" cy="18" r="7.5" fill="#3d3a38" stroke="#999" />
            <text x="17" y="22" textAnchor="middle" fontFamily="'Open Sans',sans-serif" fontSize="11" fontWeight="600" fill="#fff">4</text>
          </svg>
        </button>
        <span className="h-10 w-px bg-[#777]" />
      </div>
    </footer>
  );
}

export default function App() {
  return (
    <div className={`relative flex h-screen flex-col overflow-hidden bg-white text-black ${uiFont}`}>
      <TitleBar />
      <MenuBar />
      <div className="flex h-[31px] shrink-0 items-center gap-[3px] pb-0.5 pl-1.5">
        <Tool icon={<ArrowDisc color="#2c9a3c" dark="#1b6a28" />} label="Page précédente" />
        <Caret className="text-black" />
        <span className="w-0.5" />
        <Tool icon={<ArrowDisc color="#b4b4b4" dark="#8e8e8e" />} label="Page suivante" />
        <Caret />
      </div>
      <div className="flex min-h-0 flex-1">
        <Sidebar />
        <div className="mx-[3px] w-0.5 shrink-0 bg-[#aaa]" />
        <ListPanel />
      </div>
      <StatusBar />
      <Taskbar />
      <Dialog />
    </div>
  );
}
